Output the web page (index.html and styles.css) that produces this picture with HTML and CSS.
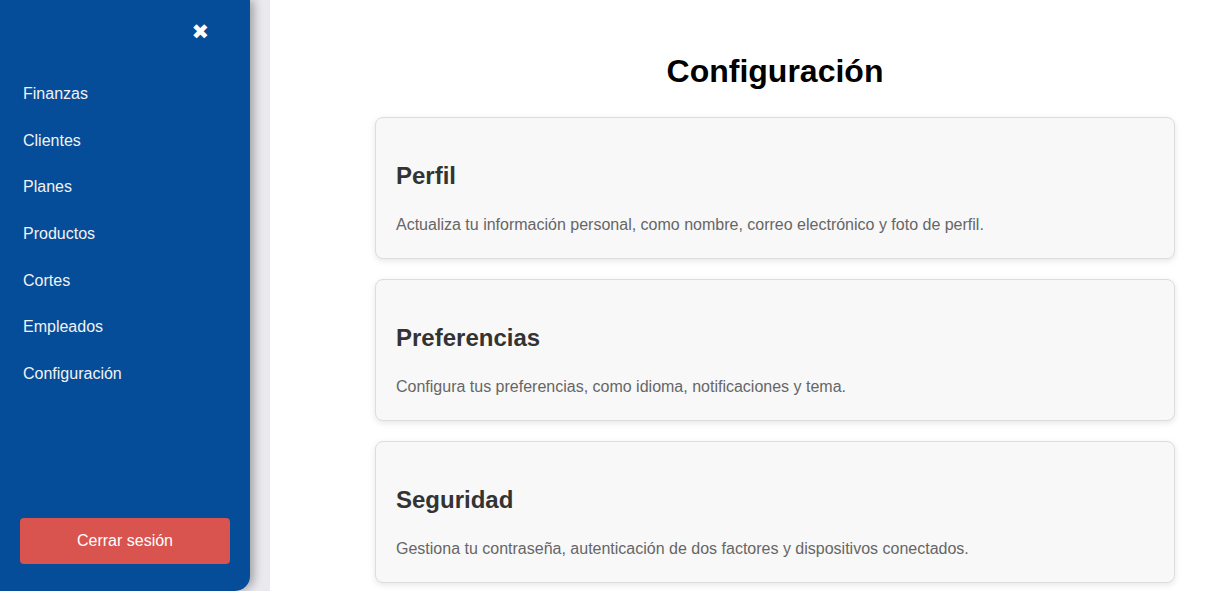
FILE: index.html
```html
<!DOCTYPE html>
<html lang="es">
<head>
<meta charset="utf-8">
<title>Configuración</title>
<link rel="stylesheet" href="styles.css">
</head>
<body>
<div class="layout">
  <aside class="sidebar">
    <div class="sidebar-top">
      <button class="close-btn" aria-label="Cerrar menú">✖</button>
    </div>
    <nav class="nav">
      <a href="#">Finanzas</a>
      <a href="#">Clientes</a>
      <a href="#">Planes</a>
      <a href="#">Productos</a>
      <a href="#">Cortes</a>
      <a href="#">Empleados</a>
      <a href="#">Configuración</a>
    </nav>
    <button class="logout">Cerrar sesión</button>
  </aside>
  <main class="main">
    <h1 class="title">Configuración</h1>
    <section class="card">
      <h2>Perfil</h2>
      <p>Actualiza tu información personal, como nombre, correo electrónico y foto de perfil.</p>
    </section>
    <section class="card">
      <h2>Preferencias</h2>
      <p>Configura tus preferencias, como idioma, notificaciones y tema.</p>
    </section>
    <section class="card">
      <h2>Seguridad</h2>
      <p>Gestiona tu contraseña, autenticación de dos factores y dispositivos conectados.</p>
    </section>
  </main>
</div>
</body>
</html>
```
FILE: styles.css
```css
* { box-sizing: border-box; }
html, body { margin: 0; padding: 0; height: 100%; overflow: hidden; }
body {
  font-family: "Liberation Sans", Arial, sans-serif;
  background: #e9e9ee;
}
.layout {
  display: flex;
  height: 591px;
}
.sidebar {
  width: 250px;
  flex: 0 0 250px;
  height: 591px;
  background: #054c99;
  border-radius: 0 0 15px 0;
  box-shadow: 4px 0 10px rgba(0, 0, 0, 0.3);
  display: flex;
  flex-direction: column;
  padding: 0 20px 28px;
  position: relative;
  z-index: 1;
}
.sidebar-top {
  display: flex;
  justify-content: flex-end;
  height: 71px;
  flex: 0 0 71px;
  padding-top: 20px;
  padding-right: 21px;
}
.close-btn {
  background: none;
  border: 0;
  padding: 0;
  color: #fff;
  font-size: 21px;
  line-height: 24px;
  height: 24px;
  cursor: pointer;
  font-family: "DejaVu Sans", sans-serif;
}
.nav {
  display: flex;
  flex-direction: column;
  flex: 1;
}
.nav a {
  color: #f2f2f2;
  text-decoration: none;
  font-size: 16px;
  line-height: 18px;
  padding: 14px 3px 14.7px;
}
.logout {
  flex: 0 0 46px;
  height: 46px;
  width: 210px;
  margin-bottom: -1px;
  background: #d9534f;
  color: #fff;
  border: 0;
  border-radius: 4px;
  font-family: "Liberation Sans", Arial, sans-serif;
  font-size: 16px;
}
.main {
  flex: 1;
  margin-left: 20px;
  background: #fff;
  padding: 53px 50px 0 105px;
}
.title {
  margin: 0 0 27px;
  text-align: center;
  font-size: 32px;
  font-weight: bold;
  color: #000;
  line-height: 37px;
}
.card {
  background: #f8f8f8;
  border: 1px solid #ddd;
  border-radius: 8px;
  box-shadow: 0 2px 6px rgba(0, 0, 0, 0.1);
  padding: 20px 20px 21px;
  margin-bottom: 20px;
}
.card h2 {
  margin: 24px 0 23px;
  font-size: 24px;
  line-height: 28px;
  color: #333;
}
.card p {
  margin: 0;
  font-size: 16px;
  line-height: 24px;
  color: #666;
}
```
